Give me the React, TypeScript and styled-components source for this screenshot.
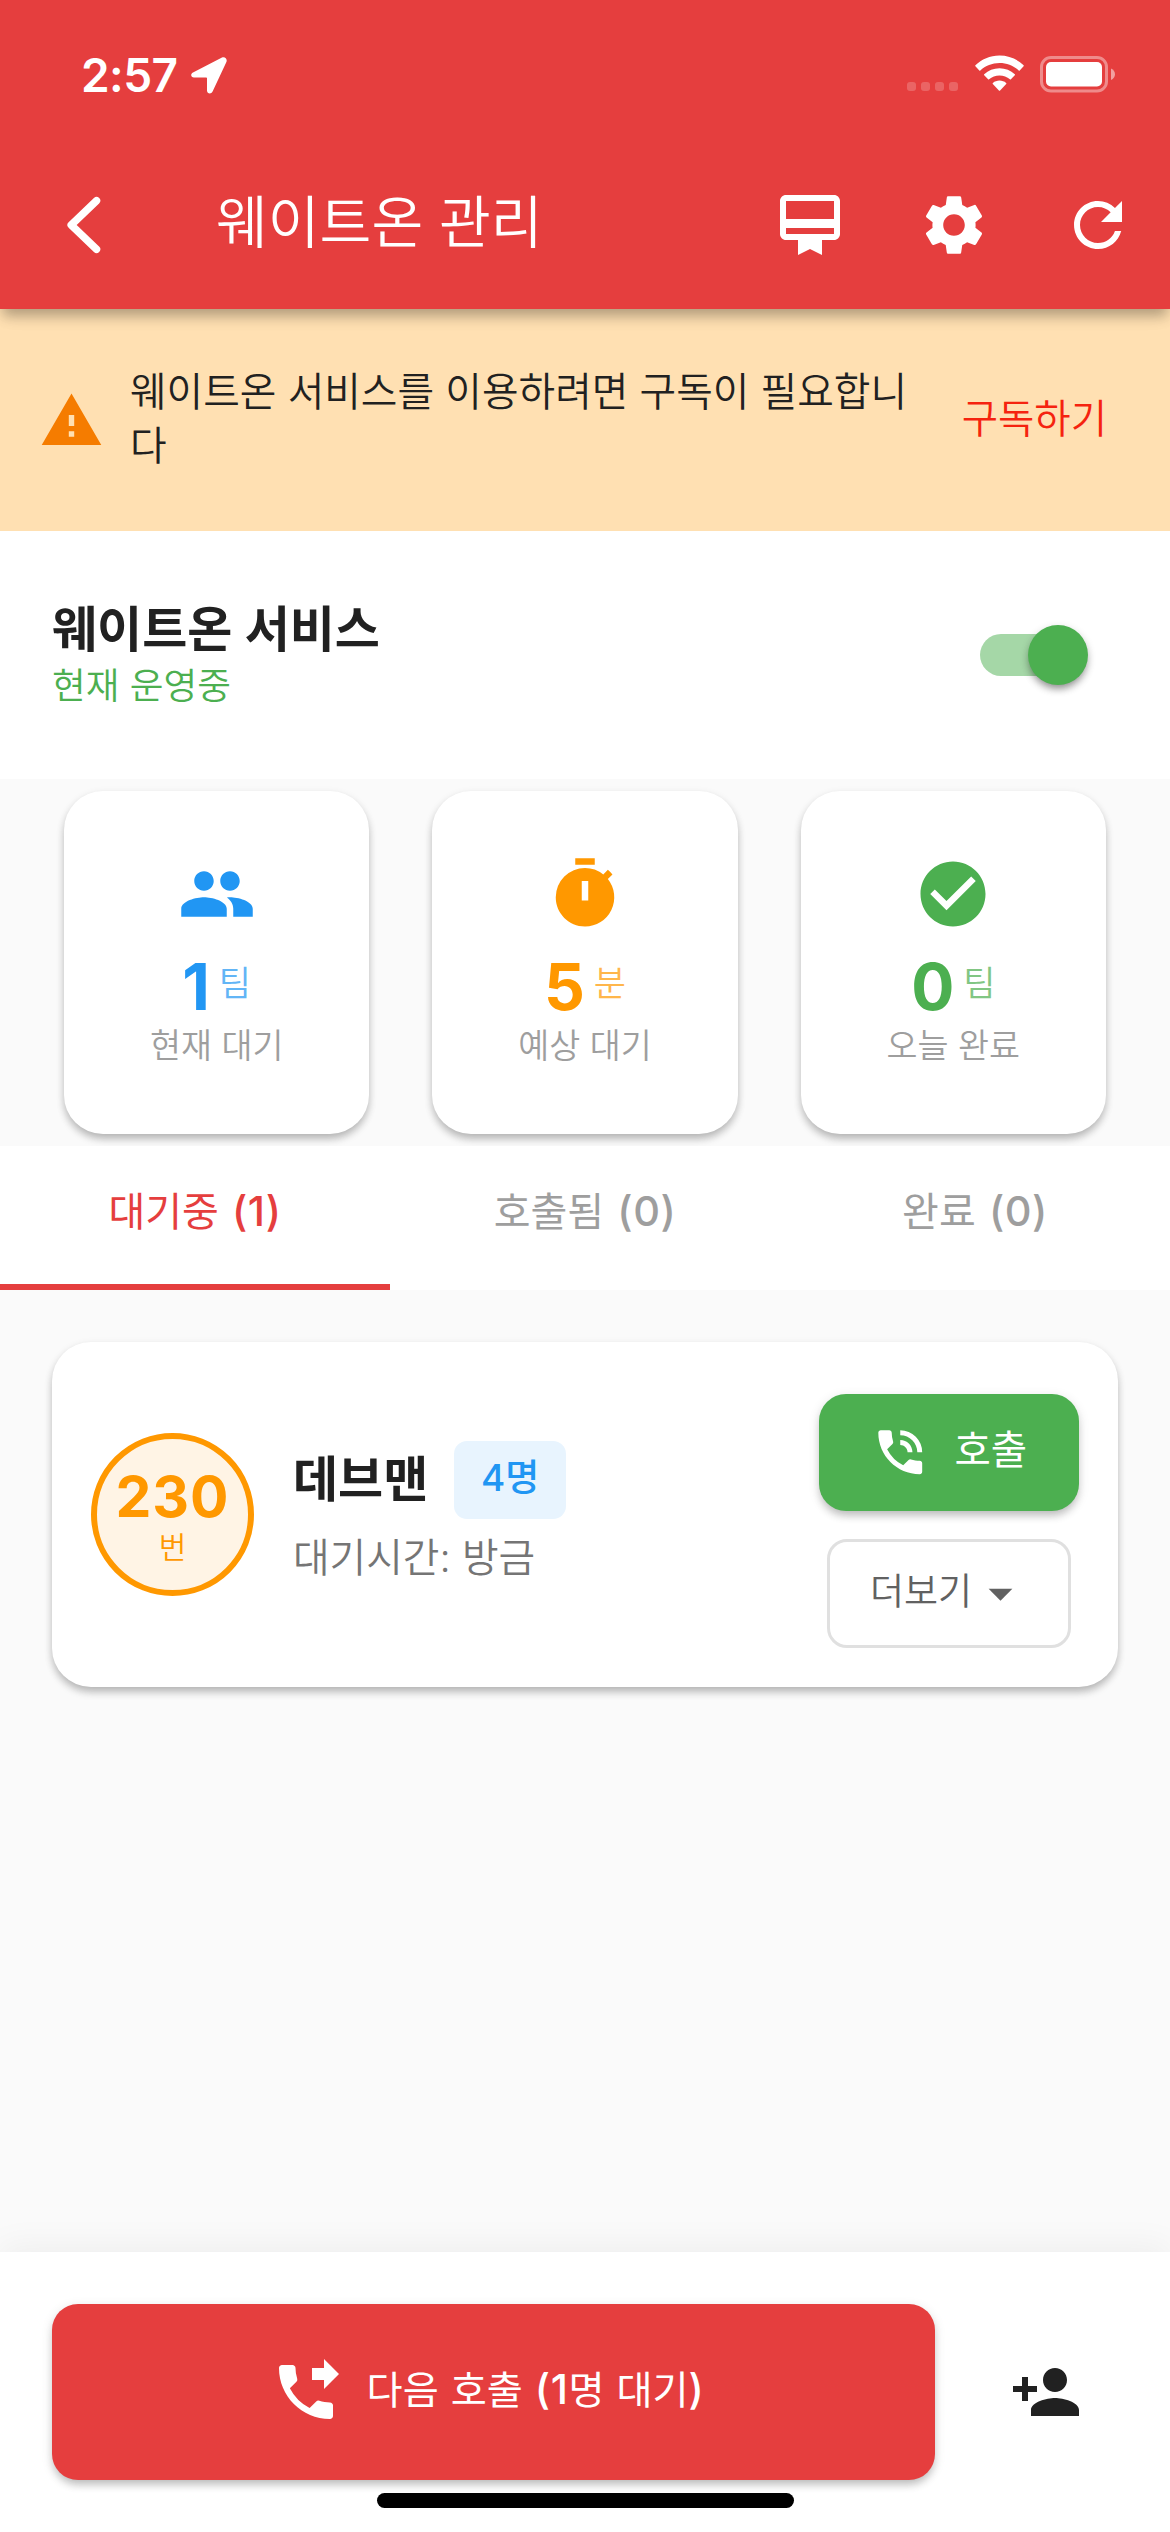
import React from "react";
import styled, { createGlobalStyle } from "styled-components";
import {
  MdArrowDropDown,
  MdCardMembership,
  MdCheckCircle,
  MdPeople,
  MdPersonAdd,
  MdPhoneForwarded,
  MdPhoneInTalk,
  MdRefresh,
  MdSettings,
  MdTimer,
  MdWarning,
} from "react-icons/md";

const color = {
  primary: "#e53e3e",
  green: "#4caf50",
  blue: "#2196f3",
  orange: "#ff9800",
  ink: "#212121",
  page: "#fafafa",
};

const GlobalStyle = createGlobalStyle`
  * { box-sizing: border-box; }
  body {
    margin: 0;
    background: ${color.page};
    font-family: Inter, "Noto Sans CJK KR", sans-serif;
    color: ${color.ink};
  }
  button {
    margin: 0;
    padding: 0;
    border: 0;
    background: none;
    font: inherit;
    color: inherit;
  }
  svg { display: block; flex: none; }
`;

const Screen = styled.div`
  display: flex;
  flex-direction: column;
  width: 1170px;
  height: 2532px;
  overflow: hidden;
  background: ${color.page};
`;

const Header = styled.header`
  position: relative;
  z-index: 1;
  flex: none;
  height: 309px;
  background: ${color.primary};
  color: #fff;
  box-shadow: 0 10px 12px -3px rgba(0, 0, 0, 0.27), 0 3px 24px rgba(0, 0, 0, 0.06);
`;

const StatusBar = styled.div`
  display: flex;
  align-items: flex-start;
  height: 141px;
  padding: 55px 55px 0 81px;
`;

const Clock = styled.span`
  width: 110px;
  font-size: 46px;
  line-height: 40px;
  font-weight: 600;
  letter-spacing: -0.6px;
`;

const StatusIcons = styled.div`
  display: flex;
  align-items: flex-start;
  margin-left: auto;
`;

const SignalDots = styled.div`
  display: flex;
  gap: 5px;
  margin: 27px 17px 0 0;
`;

const Dot = styled.i`
  width: 9px;
  height: 9px;
  border-radius: 3px;
  background: rgba(255, 255, 255, 0.2);
`;

const Toolbar = styled.div`
  display: flex;
  align-items: center;
  height: 168px;
  padding: 0 36px 0 64px;
`;

const Title = styled.h1`
  margin: 0 auto 0 112px;
  font-size: 56.3px;
  line-height: 72px;
  font-weight: 350;
  white-space: nowrap;
  transform: translateY(-2px);
`;

const ToolbarActions = styled.div`
  display: flex;
  gap: 72px;
`;

const Banner = styled.section`
  display: flex;
  flex: none;
  align-items: center;
  height: 222px;
  padding: 0 63px 0 39px;
  background: #ffe0b2;
  color: #f57c00;
`;

const BannerText = styled.p`
  margin: 0 auto 0 26px;
  font-size: 39.8px;
  line-height: 54px;
  font-weight: 350;
  white-space: nowrap;
  color: ${color.ink};
  transform: translateY(-1px);
`;

const SubscribeButton = styled.button`
  margin-bottom: 2px;
  font-size: 39.5px;
  line-height: 54px;
  font-weight: 350;
  color: #f5230f;
`;

const Service = styled.section`
  display: flex;
  flex: none;
  align-items: center;
  justify-content: space-between;
  height: 248px;
  padding: 0 82px 0 52px;
  background: #fff;
`;

const ServiceTitle = styled.h2`
  margin: 0;
  font-size: 49px;
  line-height: 62px;
  font-weight: 600;
`;

const ServiceState = styled.p`
  margin: 0;
  font-size: 36.7px;
  line-height: 50px;
  font-weight: 350;
  color: ${color.green};
`;

const Switch = styled.button`
  display: flex;
  align-items: center;
  justify-content: flex-end;
  width: 108px;
  height: 60px;
`;

const SwitchTrack = styled.span`
  width: 99px;
  height: 42px;
  margin-right: -51px;
  border-radius: 21px;
  background: #a5d7a7;
`;

const SwitchThumb = styled.span`
  z-index: 0;
  width: 60px;
  height: 60px;
  border-radius: 50%;
  background: ${color.green};
  box-shadow: 0 6px 8px -3px rgba(0, 0, 0, 0.35), 0 3px 9px rgba(0, 0, 0, 0.2);
`;

const cardShadow =
  "0 6px 8px -1px rgba(0, 0, 0, 0.2), 0 3px 9px rgba(0, 0, 0, 0.12)";

const Stats = styled.section`
  display: grid;
  flex: none;
  grid-template-columns: repeat(3, 1fr);
  gap: 63px;
  height: 367px;
  padding: 12px 64px;
  overflow: hidden;
`;

const StatCard = styled.article<{ $tone: string }>`
  display: flex;
  flex-direction: column;
  align-items: center;
  padding-top: 64px;
  border-radius: 39px;
  background: #fff;
  color: ${(p) => p.$tone};
  box-shadow: ${cardShadow};
`;

const StatValue = styled.div`
  display: flex;
  align-items: flex-start;
  gap: 9px;
  height: 76px;
  margin-top: 16px;
  font-size: 64px;
  line-height: 76px;
  font-weight: 700;
`;

const StatUnit = styled.span`
  font-size: 35px;
  line-height: 69px;
  font-weight: 350;
  opacity: 0.7;
`;

const StatLabel = styled.span`
  font-size: 33.7px;
  line-height: 42px;
  font-weight: 350;
  color: #9e9e9e;
`;

const Tabs = styled.nav`
  display: grid;
  flex: none;
  grid-template-columns: repeat(3, 1fr);
  height: 144px;
  background: #fff;
`;

const Tab = styled.button<{ $active?: boolean }>`
  padding-bottom: ${(p) => (p.$active ? 12 : 18)}px;
  border-bottom: ${(p) => (p.$active ? `6px solid ${color.primary}` : "0")};
  font-size: 40px;
  font-weight: 400;
  word-spacing: 2px;
  color: ${(p) => (p.$active ? color.primary : "#9e9e9e")};
`;

const Count = styled.span`
  font-size: 41.5px;
  font-weight: 500;
  letter-spacing: 0.5px;
`;

const Queue = styled.main`
  flex: 1;
  padding: 52px;
`;

const QueueCard = styled.article`
  display: flex;
  align-items: center;
  height: 345px;
  padding: 0 39px;
  border-radius: 39px;
  background: #fff;
  box-shadow: ${cardShadow};
`;

const Ticket = styled.div`
  display: flex;
  flex: none;
  flex-direction: column;
  align-items: center;
  width: 163px;
  height: 163px;
  padding-top: 28px;
  border: 6.5px solid ${color.orange};
  border-radius: 50%;
  background: #fff4e5;
  color: ${color.orange};
`;

const TicketNumber = styled.strong`
  font-size: 57px;
  line-height: 60px;
  font-weight: 700;
  letter-spacing: 1px;
`;

const TicketUnit = styled.span`
  font-size: 30px;
  line-height: 40px;
  font-weight: 350;
`;

const Guest = styled.div`
  display: flex;
  flex-direction: column;
  gap: 12px;
  margin: -4px auto 0 39px;
`;

const GuestTop = styled.div`
  display: flex;
  align-items: center;
  gap: 26px;
`;

const GuestName = styled.strong`
  font-size: 49px;
  line-height: 76px;
  font-weight: 600;
`;

const PartyBadge = styled.span`
  width: 112px;
  height: 78px;
  border-radius: 13px;
  background: #e8f4fe;
  font-size: 37px;
  line-height: 74px;
  font-weight: 500;
  text-align: center;
  color: ${color.blue};
`;

const WaitTime = styled.span`
  font-size: 39.8px;
  line-height: 54px;
  font-weight: 350;
  color: #757575;
`;

const Actions = styled.div`
  display: flex;
  flex-direction: column;
  align-items: center;
  gap: 28px;
  margin-top: 13px;
`;

const raisedShadow =
  "0 6px 9px -2px rgba(0, 0, 0, 0.2), 0 3px 12px rgba(0, 0, 0, 0.12)";

const CallButton = styled.button`
  display: flex;
  align-items: center;
  gap: 25px;
  width: 260px;
  height: 117px;
  padding: 0 52px;
  border-radius: 27px;
  background: ${color.green};
  font-size: 39.5px;
  font-weight: 400;
  white-space: nowrap;
  color: #fff;
  box-shadow: ${raisedShadow};
`;

const MoreButton = styled.button`
  display: flex;
  align-items: center;
  width: 244px;
  height: 109px;
  padding-left: 40px;
  border: 3px solid #e0e0e0;
  border-radius: 20px;
  font-size: 37px;
  font-weight: 350;
  color: #616161;
`;

const ButtonText = styled.span<{ $lift?: number }>`
  line-height: 54px;
  margin-bottom: ${(p) => p.$lift ?? 0}px;
  white-space: nowrap;
`;

const BottomBar = styled.footer`
  display: flex;
  flex: none;
  flex-direction: column;
  height: 280px;
  padding: 52px 88px 24px 52px;
  background: #fff;
  box-shadow: 0 -6px 32px rgba(0, 0, 0, 0.05);
`;

const BottomActions = styled.div`
  display: flex;
  align-items: center;
  justify-content: space-between;
`;

const NextButton = styled.button`
  display: flex;
  align-items: center;
  justify-content: center;
  gap: 25px;
  width: 883px;
  height: 176px;
  padding-right: 13px;
  border-radius: 26px;
  background: ${color.primary};
  font-size: 39.2px;
  font-weight: 400;
  word-spacing: 1px;
  color: #fff;
  box-shadow: ${raisedShadow};
`;

const HomeIndicator = styled.div`
  width: 417px;
  height: 15px;
  margin: 13px 0 0 325px;
  border-radius: 8px;
  background: #000;
`;

const LocationGlyph = styled.svg`
  margin-top: 2px;
`;

const BatteryGlyph = styled.svg`
  margin-left: 16px;
`;

function LocationIcon() {
  return (
    <LocationGlyph width="36" height="37" viewBox="0 0 36 37" fill="#fff">
      <path d="M31 .5 2 15.400 C-1 17 0 20.500 3 20.500H15.200Q16 20.500 16 21.300V33.500C16 37 20.300 37.500 21.600 34.500L35.400 5C36.600 2 34 -.8 31 .5Z" />
    </LocationGlyph>
  );
}

function WifiIcon() {
  return (
    <svg width="49" height="37" viewBox="0 0 49 37" fill="#fff">
      <path d="M24.500 0.500C34 .5 42.500 4.300 48.600 10.300Q49 10.800 48.600 11.300L44.700 15.400Q44.200 15.900 43.700 15.400C38.600 10.700 31.900 7.900 24.500 7.900S10.400 10.700 5.300 15.400Q4.800 15.900 4.300 15.400L.4 11.300Q0 10.800 .4 10.300C6.500 4.300 15 .5 24.500 .5Z" />
      <path d="M24.500 13.300C30.400 13.300 35.700 15.500 39.800 19.200Q40.300 19.700 39.800 20.200L35.900 24.300Q35.400 24.800 34.900 24.300C32.100 21.900 28.500 20.400 24.500 20.400S16.900 21.900 14.100 24.300Q13.600 24.800 13.100 24.300L9.200 20.200Q8.700 19.700 9.200 19.200C13.300 15.500 18.600 13.300 24.500 13.300Z" />
      <path d="M24.500 25.600C27 25.600 29.300 26.500 31.100 27.900Q31.700 28.400 31.200 29L25.100 35.500Q24.500 36.100 23.900 35.500L17.800 29Q17.300 28.400 17.900 27.900C19.700 26.500 22 25.600 24.500 25.600Z" />
    </svg>
  );
}

function BatteryIcon() {
  return (
    <BatteryGlyph width="75" height="38" viewBox="0 0 75 38">
      <rect x="1.500" y="2.500" width="65" height="33.500" rx="9.500" fill="none" stroke="#fff" strokeOpacity=".4" strokeWidth="3" />
      <rect x="6" y="7" width="56" height="24.500" rx="5" fill="#fff" />
      <path d="M71 13.500Q75 15.500 75 19.200T71 25Z" fill="#fff" fillOpacity=".5" />
    </BatteryGlyph>
  );
}

function BackIcon() {
  return (
    <svg width="40" height="60" viewBox="0 0 40 60" fill="none" stroke="#fff" strokeWidth="7.500" strokeLinecap="round" strokeLinejoin="round">
      <path d="M32.500 5.700 7.200 30 32.500 54.300" />
    </svg>
  );
}

const stats = [
  { icon: MdPeople, value: 1, unit: "팀", label: "현재 대기", tone: color.blue },
  { icon: MdTimer, value: 5, unit: "분", label: "예상 대기", tone: color.orange },
  { icon: MdCheckCircle, value: 0, unit: "팀", label: "오늘 완료", tone: color.green },
];

const tabs = [
  { label: "대기중", count: 1, active: true },
  { label: "호출됨", count: 0, active: false },
  { label: "완료", count: 0, active: false },
];

export default function App() {
  return (
    <Screen>
      <GlobalStyle />
      <Header>
        <StatusBar>
          <Clock>2:57</Clock>
          <LocationIcon />
          <StatusIcons>
            <SignalDots>
              <Dot />
              <Dot />
              <Dot />
              <Dot />
            </SignalDots>
            <WifiIcon />
            <BatteryIcon />
          </StatusIcons>
        </StatusBar>
        <Toolbar>
          <BackIcon />
          <Title>웨이트온 관리</Title>
          <ToolbarActions>
            <MdCardMembership size={72} />
            <MdSettings size={72} />
            <MdRefresh size={72} />
          </ToolbarActions>
        </Toolbar>
      </Header>

      <Banner>
        <MdWarning size={65} />
        <BannerText>
          웨이트온 서비스를 이용하려면 구독이 필요합니
          <br />다
        </BannerText>
        <SubscribeButton>구독하기</SubscribeButton>
      </Banner>

      <Service>
        <div>
          <ServiceTitle>웨이트온 서비스</ServiceTitle>
          <ServiceState>현재 운영중</ServiceState>
        </div>
        <Switch role="switch" aria-checked="true">
          <SwitchTrack />
          <SwitchThumb />
        </Switch>
      </Service>

      <Stats>
        {stats.map(({ icon: Icon, value, unit, label, tone }) => (
          <StatCard key={label} $tone={tone}>
            <Icon size={78} />
            <StatValue>
              {value}
              <StatUnit>{unit}</StatUnit>
            </StatValue>
            <StatLabel>{label}</StatLabel>
          </StatCard>
        ))}
      </Stats>

      <Tabs>
        {tabs.map((tab) => (
          <Tab key={tab.label} $active={tab.active}>
            {tab.label} <Count>({tab.count})</Count>
          </Tab>
        ))}
      </Tabs>

      <Queue>
        <QueueCard>
          <Ticket>
            <TicketNumber>230</TicketNumber>
            <TicketUnit>번</TicketUnit>
          </Ticket>
          <Guest>
            <GuestTop>
              <GuestName>데브맨</GuestName>
              <PartyBadge>4명</PartyBadge>
            </GuestTop>
            <WaitTime>대기시간: 방금</WaitTime>
          </Guest>
          <Actions>
            <CallButton>
              <MdPhoneInTalk size={58.5} />
              <ButtonText $lift={5}>호출</ButtonText>
            </CallButton>
            <MoreButton>
              <ButtonText $lift={3}>더보기</ButtonText>
              <MdArrowDropDown size={57} />
            </MoreButton>
          </Actions>
        </QueueCard>
      </Queue>

      <BottomBar>
        <BottomActions>
          <NextButton>
            <MdPhoneForwarded size={72} />
            <ButtonText $lift={6}>
              다음 호출 <Count>(1</Count>명 대기<Count>)</Count>
            </ButtonText>
          </NextButton>
          <MdPersonAdd size={72} />
        </BottomActions>
        <HomeIndicator />
      </BottomBar>
    </Screen>
  );
}
